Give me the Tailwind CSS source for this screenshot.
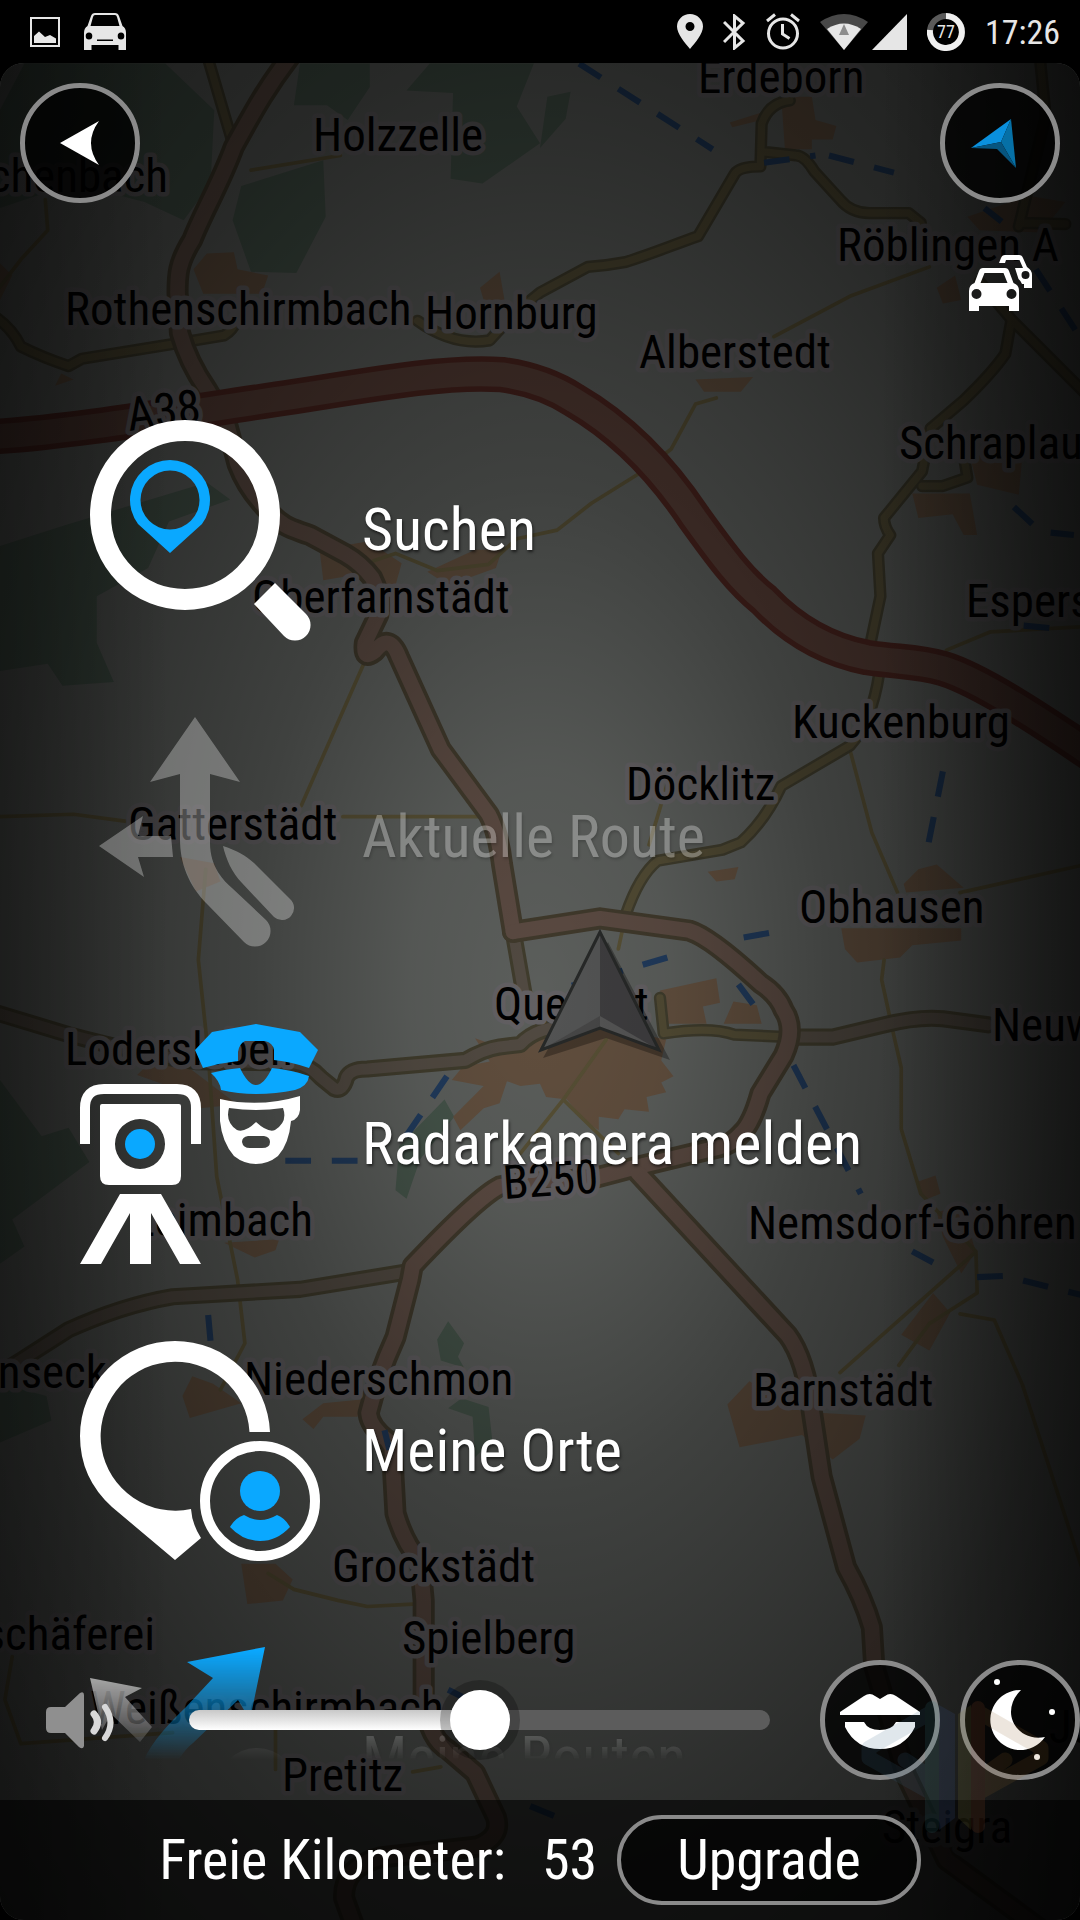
<!DOCTYPE html>
<html lang="de">
<head>
  <meta charset="UTF-8" />
  <meta name="viewport" content="width=device-width, initial-scale=1.0"/>
  <title>Navigation</title>
  <script src="https://cdn.jsdelivr.net/npm/@tailwindcss/browser@4"></script>
</head>
<body class="h-screen flex flex-col bg-black text-white font-['Roboto_Condensed','Liberation_Sans',sans-serif]">

  <!-- Status bar -->
  <header class="h-[63px] shrink-0 flex items-center justify-between pl-[30px] pr-5 text-[#e6e6e6]">
    <div class="flex items-center gap-6">
      <svg class="w-[30px] h-[30px]" viewBox="0 0 30 30" fill="currentColor">
        <rect x="1" y="1" width="28" height="28" fill="none" stroke="currentColor" stroke-width="2"/>
        <path d="M4 26V19L9 14.500L15 20L20 18L26 21.500V26Z"/>
      </svg>
      <svg class="w-[42px] h-[38px]" viewBox="0 0 42 38" fill="currentColor">
        <path fill-rule="evenodd" d="M11 0H31Q34 0 35 3L38.500 13Q42 15 42 20V37H34.500V32H7.500V37H0V20Q0 15 3.500 13L7 3Q8 0 11 0ZM11 2Q9.500 2 9 4L6.500 13H35.500L33 4Q32.500 2 31 2ZM5 19.500A3.300 3.500 0 1 0 5 26.500A3.300 3.500 0 1 0 5 19.500ZM37 19.500A3.300 3.500 0 1 0 37 26.500A3.300 3.500 0 1 0 37 19.500ZM13 26.500V28H29V26.500Z"/>
      </svg>
    </div>
    <div class="flex items-center gap-5">
      <svg class="w-[26px] h-[35px]" viewBox="0 0 26 35" fill="currentColor">
        <path fill-rule="evenodd" d="M13 0A13 12.500 0 0 1 26 12.500C26 20 18 29 13 35C8 29 0 20 0 12.500A13 12.500 0 0 1 13 0ZM13 8A4.500 4.500 0 1 0 13 17A4.500 4.500 0 1 0 13 8Z"/>
      </svg>
      <svg class="w-[23px] h-[36px]" viewBox="0 0 23 36" fill="none" stroke="currentColor" stroke-width="3">
        <path d="M1 8L20 27L11.500 34V2L20 9L1 28"/>
      </svg>
      <svg class="w-[34px] h-[37px]" viewBox="0 0 34 37" fill="none" stroke="currentColor" stroke-width="3">
        <circle cx="17" cy="20.500" r="14.500"/>
        <path d="M16.500 11V21L23.500 25.500M1 8L9 1.500M33 8L25 1.500"/>
      </svg>
      <div class="flex items-center gap-1">
        <svg class="w-12 h-[36px]" viewBox="0 0 48 36">
          <path d="M0 8Q24 -8 48 8L24 36Z" fill="#484848"/>
          <path d="M7 15Q24 4 41 15L24 36Z" fill="#e6e6e6"/>
          <path d="M24 10L29 21H19Z" fill="#8c8c8c"/>
        </svg>
        <svg class="w-[35px] h-[36px]" viewBox="0 0 35 36"><path d="M35 0V36H0Z" fill="#e6e6e6"/></svg>
      </div>
      <svg class="w-[38px] h-[38px]" viewBox="0 0 38 38">
        <circle cx="19" cy="19" r="16" fill="none" stroke="#5a5a5a" stroke-width="6"/>
        <path d="M19 3A16 16 0 1 1 3 17" fill="none" stroke="#f0f0f0" stroke-width="6"/>
        <text x="19" y="25" text-anchor="middle" font-size="18" fill="#e6e6e6">77</text>
      </svg>
      <span class="text-[34px] leading-none">17:26</span>
    </div>
  </header>

  <main class="relative flex-1 min-h-0 flex flex-col overflow-hidden rounded-3xl bg-[#636663]">

    <!-- Map: land use, roads, railways -->
    <svg class="absolute inset-0 w-full h-full" viewBox="0 51.500 882 1516.500" preserveAspectRatio="xMidYMid slice" fill="none" stroke-linecap="round" stroke-linejoin="round">
      <defs>
        <path id="motorway" d="M-10 357C60 353 150 337 240 324C320 311 370 303 410 306C432 309 452 316 469 327C500 345 535 375 567 423C590 455 605 475 624 490C645 512 672 530 708 537C735 541 750 540 770 546C800 555 850 588 900 622"/>
        <g id="mainRoads">
          <path d="M238 45C215 75 205 95 191 120C180 150 165 175 157 196C145 215 145 225 145 239L147 272C152 290 160 305 169 318L185 345L194 379C200 395 210 408 219 417C232 432 240 432 253 437L281 452Q295 460 304 472Q312 488 309 502L298 525Q296 540 306 532Q318 516 326 537L360 612L399 665Q407 680 410 706L419 761"/>
          <path d="M419 761L490 750L563 760Q580 765 621 803Q635 812 640 825Q650 840 640 862L621 893Q614 918 605 926Q597 935 587 937L520 953L486 962Q440 962 408 969Q390 978 337 1034L335 1045L323 1092Q308 1125 301 1154Q302 1165 316 1176L320 1182L323 1236Q330 1260 343 1275L346 1307V1388Q350 1420 366 1429L388 1448L405 1484Q410 1500 390 1508L310 1517Q280 1525 281 1550L290 1575"/>
          <path d="M521 958L643 1090Q658 1110 663 1153L671 1206L691 1280Q705 1305 712 1329L714 1361L740 1450L773 1519L849 1575"/>
        </g>
        <g id="sideRoads">
          <path d="M-10 825L56 845Q120 862 160 867L240 868Q253 870 262 880L273 889Q280 892 283 880Q286 873 300 873L380 866Q395 857 408 855L425 853Q438 838 470 838"/>
          <path d="M420 766L428 812M645 847H680L722 837Q750 830 770 832L807 837M337 1038L245 1053L141 1059Q100 1066 56 1086L17 1111L-10 1128"/>
        </g>
        <g id="yellowRoads">
          <path d="M341 262Q370 283 400 278Q420 255 441 239L480 218Q495 217 511 214C530 208 550 200 570 193L600 142Q604 136 621 136L622 101Q628 84 645 82M624 124L650 127Q657 127 665 140L686 163Q695 174 710 174H742L752 182"/>
          <path d="M-5 258Q10 268 17 283Q35 292 56 299L67 293L141 281L183 274Q190 270 193 262M169 45L191 120"/>
          <path d="M849 45L854 95L832 185M870 183L835 182M800 230L826 261L821 289Q810 305 787 327L760 350M826 261L890 325M760 350L753 385L722 423Q722 430 727 437L717 452L719 487L711 525L718 550Q712 590 694 609L638 642Q625 670 605 688L590 694L537 703Q522 715 511 747M753 397H770L790 390L787 372"/>
          <path d="M539 815L542 844Q580 838 600 845L645 847"/>
        </g>
      </defs>

      <g fill="#4a5a4f">
        <path d="M20 52H135L175 90L172 150L150 180L118 165L60 150L0 170V90ZM245 52H302V71L284 98L267 86L240 86ZM332 74L351 52H436L422 87L441 117L394 150L368 146L370 76ZM197 152L264 131L266 177L242 223L205 222L190 180Z"/>
        <path d="M0 446L53 429L169 394L188 408L138 426L121 464L79 487V525L93 557L51 560L39 542L0 548ZM0 882L34 928L56 921L73 949L10 996L20 1018L0 1032ZM363 898L371 912L343 947L332 979L323 972L326 936Z"/>
        <path d="M366 1079L379 1097L374 1108L379 1117L360 1111L357 1094ZM366 1150L377 1142L399 1149L402 1176L388 1190L386 1157ZM447 79L466 75L462 97L441 121ZM0 1130L38 1140L42 1160L0 1178Z"/>
      </g>

      <g fill="#695543">
        <path d="M369 882L378 871L400 867L388 848L408 855L441 844L490 838L544 849L540 866L550 879L540 884L544 892L528 896L530 908L510 906L505 914L489 912V923L477 915L463 898L446 896L441 885L425 887L414 883L408 901L395 905L376 923L370 912L395 887ZM539 809L585 799L588 819L574 822L577 836H544ZM599 818L618 821L622 836H591Z"/>
        <path d="M687 758H785V768L745 772L735 782L700 786L690 775ZM738 722L750 710L765 706L787 725L740 729ZM594 1147L612 1128L655 1153L707 1156L702 1175L680 1192L655 1172L604 1182ZM745 403H792L798 437H787L778 420L750 423ZM792 372H835L832 404L798 396Z"/>
        <path d="M638 79H663L666 98L683 103L680 114H663V122H641ZM596 100L622 92V98L598 104ZM169 207L191 206L194 220L219 225L214 240H166L158 220ZM392 235L408 222L412 245H395ZM261 449L301 442L328 460L323 478L281 471L264 474ZM388 449H410L405 464L366 478L349 467Z"/>
        <path d="M112 878L130 860L157 874L194 902L163 905L146 890ZM183 1015L228 1012L225 1021L208 1027ZM157 1124L174 1130L197 1146L155 1158L149 1140ZM247 1159L264 1146L295 1143L292 1157L264 1157L256 1167ZM197 1277H225L239 1290L231 1307L202 1310ZM790 177L840 160L870 165L850 190L800 188ZM765 235L780 225L785 245L770 248ZM568 310L615 308L605 320H575Z"/>
        <path d="M750 965L764 960L768 975L755 980ZM765 990L785 985L797 1022L785 1040L770 1010ZM762 1056L776 1072L759 1103L736 1090ZM147 700L175 705L180 720L160 728ZM0 215L10 225L0 245ZM50 305L60 310L45 315ZM578 712L603 708L600 718L585 720Z"/>
      </g>

      <g stroke="#5e5639" stroke-width="3">
        <path d="M585 325L568 330L548 367L520 388L483 411L455 433L422 440L399 461L357 466L323 452L305 458M298 540L246 658M0 667L60 665L105 671M280 667H392M168 710L162 784L170 860L177 961L194 1045L200 1097L180 1135"/>
        <path d="M694 612L712 680L733 729M784 729L882 707M722 784L720 800L730 846L736 872V922L752 975L797 1022L798 1056L759 1081L734 1115M795 1024L686 1121M784 1073L812 1078L835 1131L885 1285M632 275L694 242L759 218M205 139L278 127M37 163L39 188L17 212L-2 237"/>
        <path d="M495 849L460 898L425 942M460 898L505 942M219 1285L240 1298L276 1307L300 1312L337 1310M10 1353L4 1388L17 1424L141 1415M337 1447L360 1443M225 1410V1445M545 640L530 690M773 531L809 516L882 512M511 747L505 775"/>
      </g>

      <use href="#yellowRoads" stroke="#444130" stroke-width="10"/>
      <use href="#yellowRoads" stroke="#585138" stroke-width="6"/>
      <use href="#sideRoads" stroke="#454130" stroke-width="14"/>
      <use href="#sideRoads" stroke="#585047" stroke-width="9"/>
      <use href="#mainRoads" stroke="#453e2f" stroke-width="18"/>
      <use href="#mainRoads" stroke="#625047" stroke-width="12"/>
      <use href="#motorway" stroke="#4f2620" stroke-width="29"/>
      <use href="#motorway" stroke="#5a4038" stroke-width="20"/>

      <g stroke="#233f63" stroke-width="5" stroke-linecap="butt" stroke-dasharray="21 17">
        <path d="M473 52L582 122M624 133L666 127M677 127L730 141M804 170L818 181M846 220L885 280M828 414L843 428M858 435L877 437M836 511L870 514M770 630L756 700M628 762L605 766M545 782L467 805M365 879L324 939M292 948H225M603 804L615 820M648 870L703 975M745 1022L762 1031M798 1043L820 1042L885 1058M170 1074L172 1096M366 1380L384 1389M433 1475L455 1484M314 1168L318 1184"/>
      </g>
    </svg>

    <!-- Map: place names -->
    <svg class="absolute inset-0 w-full h-full" viewBox="0 63 1080 1857" preserveAspectRatio="xMidYMid slice">
      <g font-size="47" fill="#000" stroke="#6b686b" stroke-width="9" stroke-linejoin="round" paint-order="stroke">
        <text x="698" y="93">Erdeborn</text>
        <text x="313" y="151">Holzzelle</text>
        <text x="168" y="192" text-anchor="end">chenbach</text>
        <text x="837" y="261">Röblingen A</text>
        <text x="65" y="325">Rothenschirmbach</text>
        <text x="425" y="329">Hornburg</text>
        <text x="639" y="368">Alberstedt</text>
        <text x="129" y="431" transform="rotate(-7 129 431)">A38</text>
        <text x="899" y="459">Schraplau</text>
        <text x="252" y="613">Oberfarnstädt</text>
        <text x="966" y="617">Espers</text>
        <text x="792" y="738">Kuckenburg</text>
        <text x="626" y="800">Döcklitz</text>
        <text x="128" y="840">Gatterstädt</text>
        <text x="799" y="923">Obhausen</text>
        <text x="992" y="1041">Neuw</text>
        <text x="494" y="1020">Querfurt</text>
        <text x="65" y="1065">Lodersleben</text>
        <text x="504" y="1199" transform="rotate(-4 504 1199)">B250</text>
        <text x="313" y="1236" text-anchor="end">Leimbach</text>
        <text x="748" y="1239">Nemsdorf-Göhren</text>
        <text x="107" y="1388" text-anchor="end">anseck</text>
        <text x="244" y="1395">Niederschmon</text>
        <text x="753" y="1406">Barnstädt</text>
        <text x="332" y="1582">Grockstädt</text>
        <text x="155" y="1650" text-anchor="end">schäferei</text>
        <text x="402" y="1654">Spielberg</text>
        <text x="90" y="1724">Weißenschirmbach</text>
        <text x="1049" y="1743">Jü</text>
        <text x="282" y="1791">Pretitz</text>
        <text x="882" y="1843">Steigra</text>
      </g>

      <!-- Own position -->
      <path d="M608 942L670 1060L606 1038L543 1058Z" fill="#000" opacity=".3"/>
      <path d="M600 932L541 1050L600 1028Z" fill="#5a5b5b"/>
      <path d="M600 932L659 1050L600 1028Z" fill="#434244"/>
      <path d="M541 1050L600 1016V1028Z" fill="#4d4d4d"/>
      <path d="M659 1050L600 1016V1028Z" fill="#5c5c5c"/>
      <path d="M600 932L541 1050L600 1028L659 1050Z" fill="none" stroke="#2a2c2b" stroke-width="3"/>
    </svg>

    <!-- Dimming over the map -->
    <div class="absolute inset-0 bg-[radial-gradient(ellipse_60%_60%_at_50%_50%,rgb(0_0_0/.08)_0%,rgb(0_0_0/.15)_20%,rgb(0_0_0/.36)_45%,rgb(0_0_0/.6)_85%,rgb(0_0_0/.82)_140%)]"></div>
    <div class="absolute inset-0 bg-[linear-gradient(to_right,rgb(0_0_0/.3),transparent_170px,transparent_calc(100%-200px),rgb(0_0_0/.5))]"></div>

    <!-- Top controls -->
    <div class="relative shrink-0 flex items-start justify-between px-5 pt-5 pb-[65px]">
      <button type="button" aria-label="Zurück" class="size-[120px] rounded-full border-[5px] border-[#8a8a8a] bg-black/75">
        <svg class="w-full h-full" viewBox="5 5 110 110"><path d="M40 60L79 38Q63 60 79 82Z" fill="#fff"/></svg>
      </button>
      <div class="flex flex-col items-center gap-[52px]">
        <button type="button" aria-label="Eigene Position" class="size-[120px] rounded-full border-[5px] border-[#8a8a8a] bg-black/75">
          <svg class="w-full h-full" viewBox="5 5 110 110">
            <path d="M71 36L31 65L61 59Z" fill="#0a90dd"/>
            <path d="M71 36L76 85L61 59Z" fill="#0670a6"/>
            <path d="M31 65L61 59L76 85L57 66Z" fill="#07557f"/>
          </svg>
        </button>
        <svg class="w-[63px] h-[56px]" viewBox="0 0 63 56" fill="#fff">
          <path fill-rule="evenodd" d="M14 13H36Q39 13 40 16L44.500 28Q50 30 50 36V56H40V51H10V56H0V36Q0 30 5.500 28L10 16Q11 13 14 13ZM15.500 18L11.500 28H38.500L34.500 18ZM7.500 34A5 5 0 1 0 7.500 44A5 5 0 1 0 7.500 34ZM42.500 34A5 5 0 1 0 42.500 44A5 5 0 1 0 42.500 34Z"/>
          <path fill-rule="evenodd" d="M30 8L32 3Q33 0 36 0H50Q53 0 54 3L58 12Q63 15 63 20V33H55V29H53Q52 26 49.500 24L46 13H54L50.500 5H37L36 8ZM56.500 16A4 4 0 1 0 56.500 24A4 4 0 1 0 56.500 16Z"/>
        </svg>
      </div>
    </div>

    <div class="relative flex-1 min-h-0">
      <!-- Menu -->
      <nav class="h-full overflow-hidden text-[60px] leading-none [text-shadow:1px_2px_3px_rgb(0_0_0/.6)] [mask-image:linear-gradient(to_top,transparent_40px,black_150px)]">
        <a href="#suchen" class="h-[307px] px-20 flex items-center gap-[42px]">
          <svg class="size-60 shrink-0" viewBox="0 0 240 240">
            <circle cx="105" cy="105" r="84.500" fill="none" stroke="#fff" stroke-width="21"/>
            <path d="M195 173L226 204A15 15 0 0 1 204 226L174 194Z" fill="#fff"/>
            <path fill-rule="evenodd" fill="#0aa8ff" d="M90 143L58 114A40 40 0 1 1 122 114ZM90 60.500A29.500 29.500 0 1 0 90 119.500A29.500 29.500 0 1 0 90 60.500Z"/>
          </svg>
          <span>Suchen</span>
        </a>
        <a href="#route" aria-disabled="true" class="h-[307px] px-20 flex items-center gap-[42px] opacity-30">
          <svg class="size-60 shrink-0" viewBox="0 0 240 240" fill="#fff">
            <path d="M115 0L160 65L130 57V126C130 150 144 164 152 171L186 203A15 15 0 0 1 164 225L128 188C108 168 100 146 100 122V57L70 65Z"/>
            <path d="M19 129L63 99L58 119H91L93 140H58L64 160Z"/>
            <path d="M143 129C158 134 165 138 174 146L210 182A11 11 0 0 1 194 200L162 166C152 156 146 142 143 129Z"/>
          </svg>
          <span>Aktuelle Route</span>
        </a>
        <a href="#radarkamera" class="h-[307px] px-20 flex items-center gap-[42px]">
          <svg class="size-60 shrink-0" viewBox="0 0 240 240" fill="#fff">
            <path d="M176 0L220 8L238 26L229 44Q212 38 194 36V26Q193 19 185 17H165Q159 20 158 28V37Q140 39 123 44L115 26L132 8Z" fill="#0aa8ff"/>
            <path d="M131 49Q146 45 160 44Q168 61 176 61Q184 61 192 44Q212 46 229 52Q228 62 215 66Q196 70 176 70Q158 70 141 66Q140 57 131 49Z" fill="#0aa8ff"/>
            <path fill-rule="evenodd" d="M140 75Q180 84 220 72V86Q219 95 211 97Q209 120 198 132Q188 140 176 140Q164 140 154 132Q142 118 140 97ZM149 84Q145 98 157 106Q165 109 176 98Q188 109 195 106Q208 98 203 84Q176 88 149 84ZM168 112Q162 113 162 118Q163 124 170 124H182Q190 124 190 118Q190 113 184 112Z"/>
            <path d="M5 120V84Q5 65 24 65H97Q116 65 116 84V120" fill="none" stroke="#fff" stroke-width="10"/>
            <path fill-rule="evenodd" d="M22 80H99Q101 80 101 82V152Q101 161 92 161H29Q20 161 20 152V82Q20 80 22 80ZM60 95A25 25 0 1 0 60 145A25 25 0 1 0 60 95Z"/>
            <circle cx="60" cy="120" r="15" fill="#0aa8ff"/>
            <path d="M40 170H81L121 240H100L71 189V240H50V189L21 240H0Z"/>
          </svg>
          <span>Radarkamera melden</span>
        </a>
        <a href="#orte" class="h-[307px] px-20 flex items-center gap-[42px]">
          <svg class="size-60 shrink-0" viewBox="0 0 240 240">
            <path d="M190 101A95 95 0 0 0 95 10A95 95 0 0 0 0 105Q0 147 32 176L95 229L121 207Q112 193 111 178A74.500 74.500 0 1 1 169.500 101Z" fill="#fff"/>
            <circle cx="180" cy="170" r="55" fill="none" stroke="#fff" stroke-width="10"/>
            <circle cx="180" cy="160" r="20" fill="#0aa8ff"/>
            <path d="M150 196Q155 187 164 184Q180 194 197 184Q205 187 210 196Q197 210 180 210Q163 210 150 196Z" fill="#0aa8ff"/>
          </svg>
          <span>Meine Orte</span>
        </a>
        <a href="#routen" class="h-[307px] px-20 flex items-center gap-[42px]">
          <svg class="size-60 shrink-0" viewBox="0 0 240 240">
            <path d="M10 40L62 50L45 59L72 89L60 104L31 76L22 92Z" fill="#fff" opacity=".8"/>
            <path d="M185 9L107 24L133 40L106 69Q68 105 62 128L60 140H90Q100 115 113 105L158 62L170 82Z" fill="#0aa8ff"/>
            <circle cx="177" cy="150" r="40" fill="#fff" opacity=".5"/>
          </svg>
          <span class="opacity-80">Meine Routen</span>
        </a>
      </nav>

      <!-- Volume and quick settings -->
      <div class="absolute inset-x-0 bottom-5 flex items-center pl-[46px]">
        <svg class="w-[70px] h-[57px] shrink-0" viewBox="0 0 70 57" fill="none">
          <path d="M5 15H19L34 1Q38 -1 38 3V54Q37 58 33 55L19 41H5Q0 41 0 36V20Q0 15 5 15Z" fill="#8f8f8f"/>
          <path d="M48 22Q55 30 48 39" stroke="#d8d8d8" stroke-width="7" stroke-linecap="round"/>
          <path d="M59 15Q70 31 59 46" stroke="#d8d8d8" stroke-width="6" stroke-linecap="round"/>
        </svg>
        <input type="range" min="0" max="100" value="50" aria-label="Lautstärke"
          class="flex-1 min-w-0 h-20 ml-[73px] mr-[50px] appearance-none bg-transparent
          [&::-webkit-slider-runnable-track]:h-5 [&::-webkit-slider-runnable-track]:rounded-full
          [&::-webkit-slider-runnable-track]:bg-[linear-gradient(to_bottom,#c8c8c8,#ffffff),linear-gradient(#5c5c5c,#5c5c5c)]
          [&::-webkit-slider-runnable-track]:bg-[length:50%_100%,100%_100%] [&::-webkit-slider-runnable-track]:bg-no-repeat
          [&::-webkit-slider-thumb]:appearance-none [&::-webkit-slider-thumb]:size-[60px] [&::-webkit-slider-thumb]:-mt-5
          [&::-webkit-slider-thumb]:rounded-full [&::-webkit-slider-thumb]:bg-white [&::-webkit-slider-thumb]:shadow-[0_0_0_10px_rgb(0_0_0/.25)]" />
        <div class="flex gap-5 shrink-0">
          <button type="button" aria-label="Stimme" class="size-[120px] rounded-full border-[5px] border-[#8a8a8a] bg-black/75">
            <svg class="w-full h-full" viewBox="5 5 110 110" fill="#fff">
              <path d="M20 55V52L44 36Q50 32 55 36L60 39L65 36Q70 32 76 36L100 52V55Z"/>
              <path d="M25 62H44Q48 70 60 70Q72 70 76 62H95V67Q84 89 60 89Q36 89 25 67Z"/>
            </svg>
          </button>
          <button type="button" aria-label="Nachtmodus" class="size-[120px] rounded-full border-[5px] border-[#8a8a8a] bg-black/75">
            <svg class="w-full h-full" viewBox="5 5 110 110" fill="#fff">
              <path d="M61 30A30 30 0 1 0 85 77C64 81 51 66 51 52Q51 40 61 30Z"/>
              <circle cx="37" cy="22" r="3"/><circle cx="92" cy="52" r="3"/><circle cx="77" cy="97" r="3"/>
            </svg>
          </button>
        </div>
      </div>
    </div>

    <!-- Free kilometres -->
    <footer class="relative shrink-0 h-[120px] flex items-center justify-center gap-5 bg-black/60 text-[56px] leading-none">
      <p class="flex gap-9"><span>Freie Kilometer:</span><span>53</span></p>
      <button type="button" class="h-[90px] px-14 rounded-full border-4 border-[#8a8a8a] bg-black/60">Upgrade</button>
    </footer>

    <!-- Map provider mark -->
    <svg class="absolute right-[30px] bottom-20 w-[190px] h-[140px] opacity-15 pointer-events-none" viewBox="0 0 190 140" fill="none" stroke-linecap="round" stroke-linejoin="round">
      <path d="M72 12L9 48V58L70 92M45 60L72 78" stroke="#3a6888" stroke-width="15"/>
      <path d="M72 8V126" stroke="#3a8088" stroke-width="14"/>
      <path d="M79 5L95 14V118L79 130Z" fill="#3a5a98"/>
      <path d="M118 12L181 48V58L120 92M145 60L120 78" stroke="#8a602a" stroke-width="15"/>
      <path d="M111 5L98 14V118L111 130Z" fill="#88823a"/>
      <path d="M118 8V126" stroke="#984c2a" stroke-width="14"/>
    </svg>
  </main>
</body>
</html>
